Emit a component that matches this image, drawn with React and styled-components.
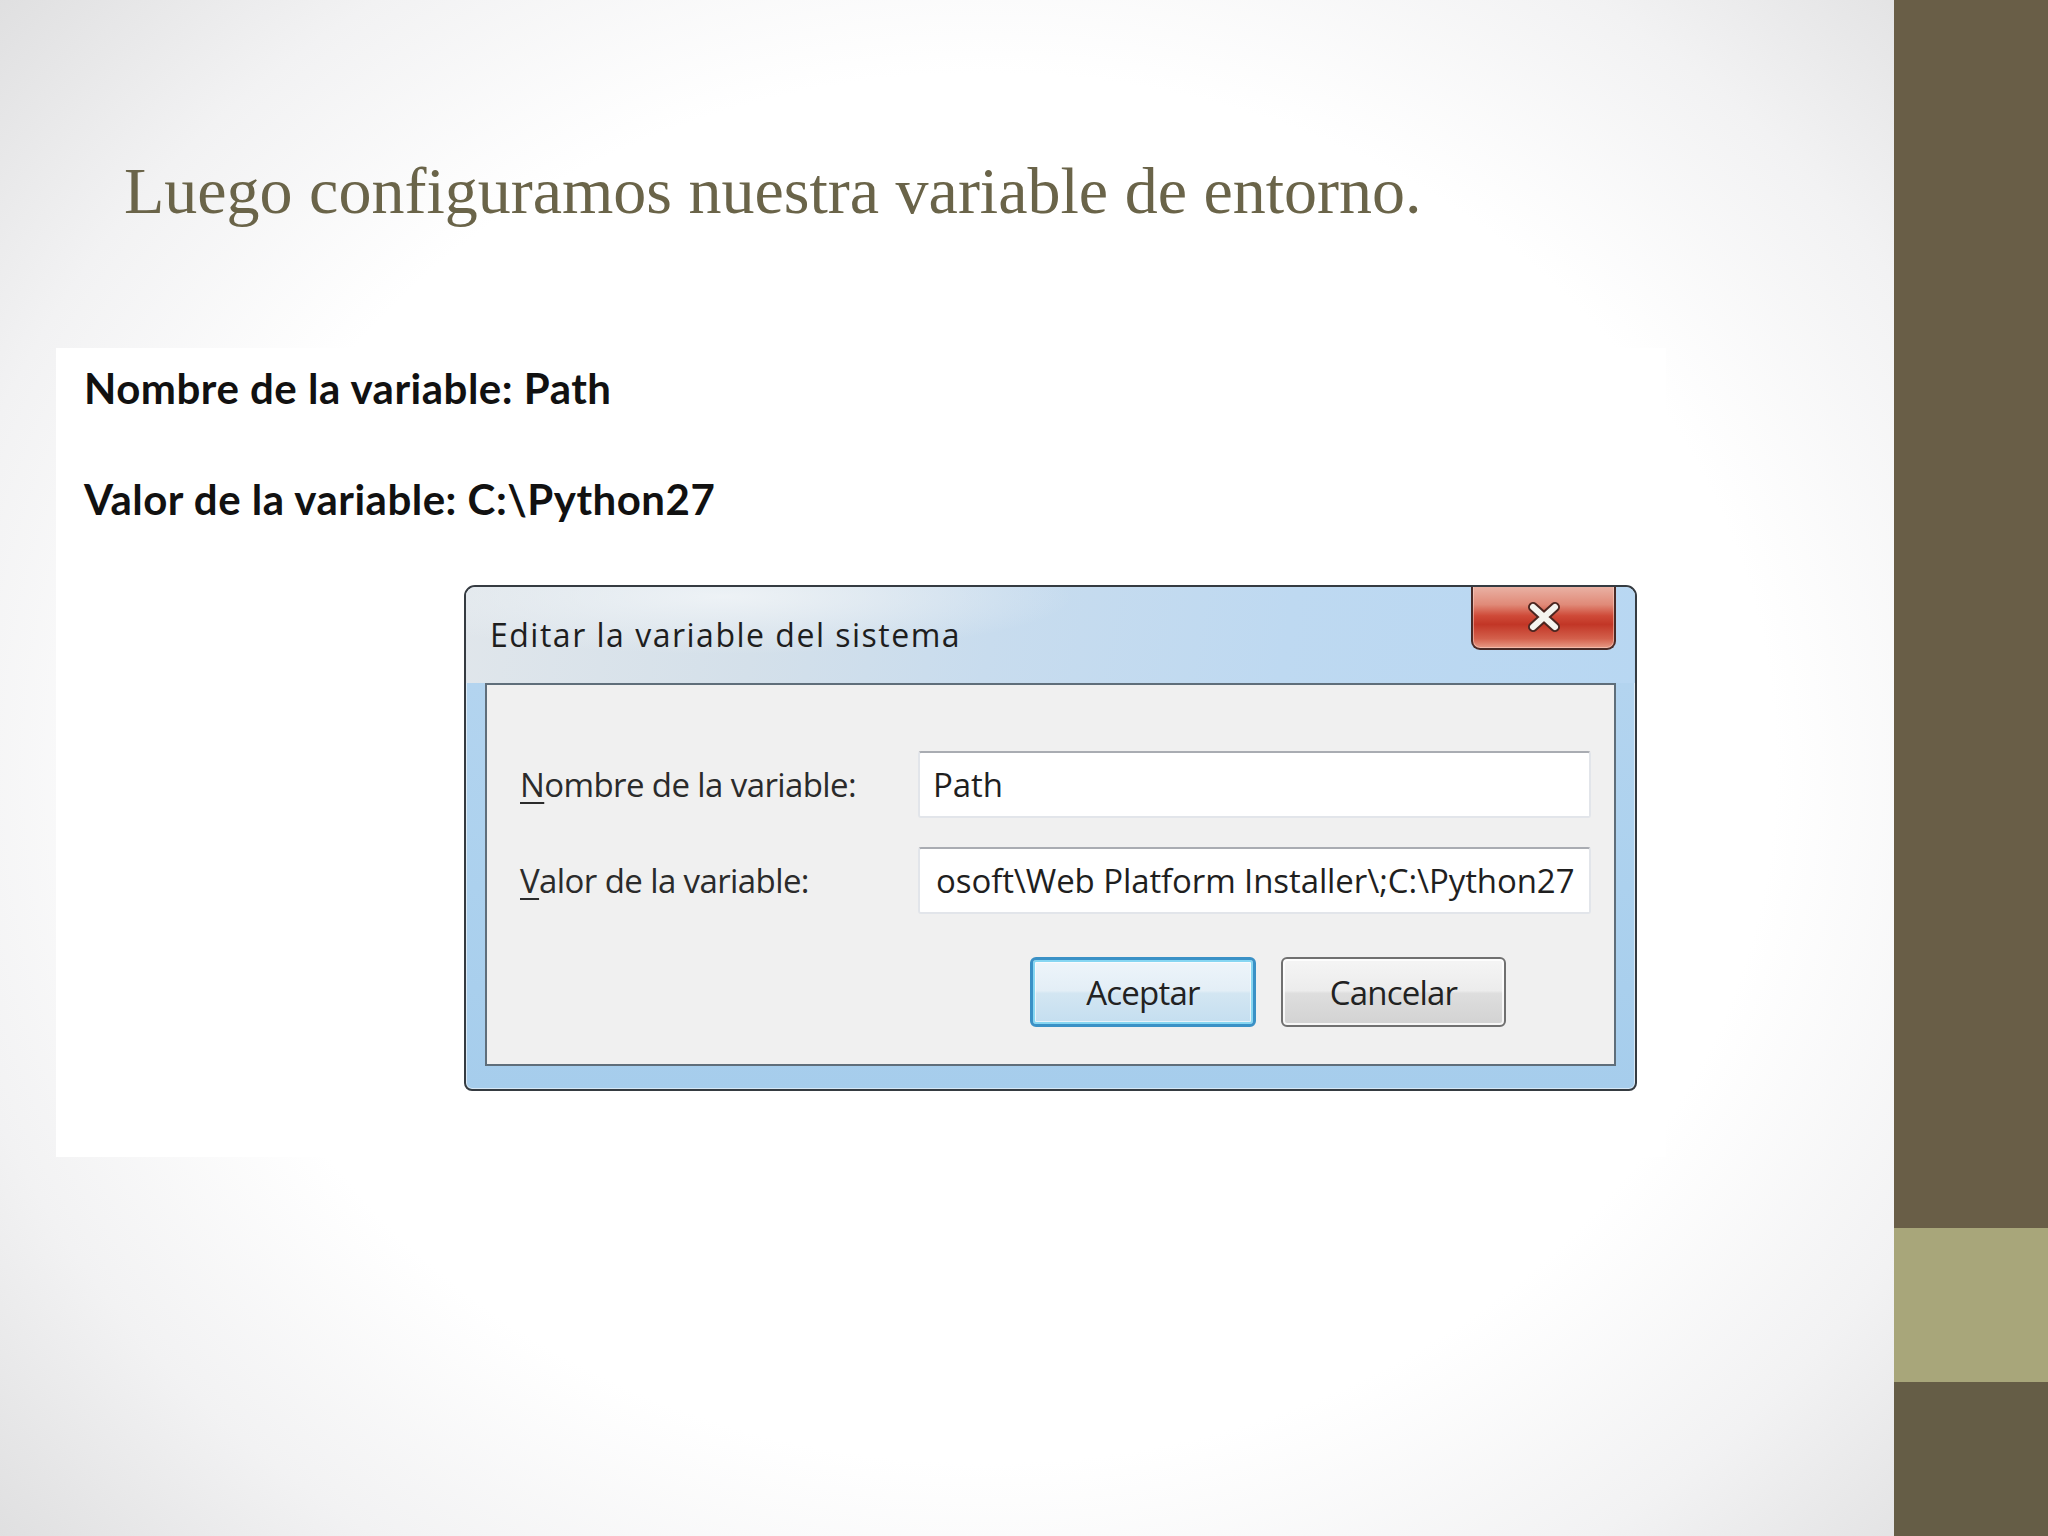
import React from "react";
import styled, { createGlobalStyle } from "styled-components";

const Global = createGlobalStyle`
  html, body { margin: 0; padding: 0; width: 2048px; height: 1536px; overflow: hidden; }
  body { font-family: "Liberation Sans", Arial, sans-serif; }
`;

const Slide = styled.div`
  display: flex;
  width: 2048px;
  height: 1536px;
`;

const Main = styled.main`
  flex: 0 0 1894px;
  display: flex;
  flex-direction: column;
  align-items: flex-start;
  padding-top: 158px;
  box-sizing: border-box;
  background: radial-gradient(ellipse 72% 78% at 52% 50%, #ffffff 58%, #f2f2f3 78%, #dcdcdd 100%);
`;

const Title = styled.h1`
  margin: 0 0 124px 124px;
  font-family: "Liberation Serif", "Times New Roman", serif;
  font-weight: 400;
  font-size: 66px;
  line-height: 66px;
  color: #6a6449;
  letter-spacing: 0px;
  white-space: nowrap;
`;

const Picture = styled.section`
  margin-left: 56px;
  width: 1610px;
  height: 809px;
  box-sizing: border-box;
  padding: 19px 0 0 28px;
  background: #ffffff;
  display: flex;
  flex-direction: column;
  align-items: flex-start;
`;

const Caption = styled.p`
  margin: 0 0 ${(p) => p.$gap}px 0;
  font-family: Lato, "Open Sans", sans-serif;
  font-weight: 700;
  font-size: 42px;
  line-height: 42px;
  color: #111111;
  letter-spacing: 0.5px;
  white-space: nowrap;
`;

const Dialog = styled.div`
  margin-left: 380px;
  width: 1173px;
  height: 506px;
  box-sizing: border-box;
  border: 2px solid #353b41;
  border-radius: 11px 11px 8px 8px;
  box-shadow: inset 0 0 0 1px rgba(255, 255, 255, 0.55);
  background: linear-gradient(180deg, #d3e2ee 0%, #c2daee 14%, #b3d4ef 19%, #acd1ee 60%, #a6cdec 100%);
  display: flex;
  flex-direction: column;
  overflow: hidden;
`;

const TitleBar = styled.div`
  height: 96px;
  flex: 0 0 96px;
  display: flex;
  justify-content: space-between;
  align-items: flex-start;
  background:
    radial-gradient(ellipse 30% 60% at 22% 10%, rgba(240, 244, 247, 0.9), rgba(240, 244, 247, 0) 100%),
    linear-gradient(100deg, #e0e6eb 0%, #d4e0ea 25%, #c8dcee 45%, #bed9f1 70%, #b8d7f2 100%);
`;

const DialogTitle = styled.div`
  padding: 32px 0 0 24px;
  font-family: "Open Sans", "Noto Sans", sans-serif;
  font-size: 32px;
  line-height: 32px;
  letter-spacing: 1.5px;
  color: #1e1e1e;
  white-space: nowrap;
`;

const CloseButton = styled.div`
  margin: -1px 19px 0 0;
  width: 145px;
  height: 64px;
  box-sizing: border-box;
  border: 2px solid #4a2a26;
  border-top: none;
  border-radius: 0 0 9px 9px;
  background: linear-gradient(180deg, #eab3a6 0%, #e08a78 30%, #cf4a38 48%, #c23626 62%, #d3604c 85%, #e79a86 100%);
  box-shadow: inset 0 0 0 1px rgba(255, 220, 210, 0.5);
  display: flex;
  align-items: center;
  justify-content: center;
`;

const Panel = styled.div`
  flex: 1;
  margin: 0 19px 23px 19px;
  box-sizing: border-box;
  border: 2px solid #5f6e7a;
  background: #f0f0f0;
  padding: 66px 25px 0 33px;
  display: flex;
  flex-direction: column;
`;

const Form = styled.div`
  display: grid;
  grid-template-columns: 398px 673px;
  row-gap: 29px;
  align-items: center;
`;

const Label = styled.label`
  font-family: "Open Sans", "Noto Sans", sans-serif;
  font-size: 33px;
  letter-spacing: -0.6px;
  color: #2b2b2b;
  white-space: nowrap;
  u { text-decoration-thickness: 2px; text-underline-offset: 5px; }
`;

const Field = styled.div`
  height: 67px;
  box-sizing: border-box;
  border: 2px solid #e2e5ea;
  border-top-color: #a9acb2;
  border-radius: 3px;
  background: #ffffff;
  padding-left: ${(p) => p.$pad}px;
  display: flex;
  align-items: center;
  overflow: hidden;
  font-family: "Open Sans", "Noto Sans", sans-serif;
  font-size: 33px;
  letter-spacing: -0.1px;
  color: #1f1f1f;
  white-space: nowrap;
`;

const Buttons = styled.div`
  display: flex;
  justify-content: flex-end;
  gap: 25px;
  margin: 43px 83px 0 0;
`;

const Button = styled.div`
  width: ${(p) => p.$w}px;
  height: 70px;
  box-sizing: border-box;
  border-radius: 6px;
  border: ${(p) => (p.$primary ? "3px solid #3a91c6" : "2px solid #707070")};
  box-shadow: ${(p) =>
    p.$primary
      ? "inset 0 0 0 2px #86d6f2, inset 0 0 0 3px rgba(255,255,255,0.6)"
      : "inset 0 0 0 2px rgba(255,255,255,0.8)"};
  background: ${(p) =>
    p.$primary
      ? "linear-gradient(180deg, #eef5fa 0%, #e3eef6 48%, #d3e6f2 52%, #c4def0 100%)"
      : "linear-gradient(180deg, #f5f5f5 0%, #ececec 48%, #dedede 52%, #d2d2d2 100%)"};
  display: flex;
  align-items: center;
  justify-content: center;
  font-family: "Open Sans", "Noto Sans", sans-serif;
  font-size: 33px;
  letter-spacing: -0.8px;
  color: #222222;
`;

const Sidebar = styled.aside`
  flex: 1;
  display: flex;
  flex-direction: column;
`;

const Band = styled.div`
  flex: ${(p) => (p.$h ? `0 0 ${p.$h}px` : "1")};
  background: ${(p) => p.$color};
`;

function CloseGlyph() {
  return (
    <svg width="40" height="36" viewBox="-20 -18 40 36">
      <path d="M-11 -10 L11 10 M11 -10 L-11 10" stroke="#4b2620" strokeWidth="10" strokeLinecap="round" />
      <path d="M-11 -10 L11 10 M11 -10 L-11 10" stroke="#f4f4ef" strokeWidth="6" strokeLinecap="round" />
    </svg>
  );
}

export default function App() {
  return (
    <>
      <Global />
      <Slide>
        <Main>
          <Title>Luego configuramos nuestra variable de entorno.</Title>
          <Picture>
            <Caption $gap={69}>Nombre de la variable: Path</Caption>
            <Caption $gap={65}>Valor de la variable: C:\Python27</Caption>
            <Dialog>
              <TitleBar>
                <DialogTitle>Editar la variable del sistema</DialogTitle>
                <CloseButton>
                  <CloseGlyph />
                </CloseButton>
              </TitleBar>
              <Panel>
                <Form>
                  <Label>
                    <u>N</u>ombre de la variable:
                  </Label>
                  <Field $pad={13}>Path</Field>
                  <Label>
                    <u>V</u>alor de la variable:
                  </Label>
                  <Field $pad={16}>osoft\Web Platform Installer\;C:\Python27</Field>
                </Form>
                <Buttons>
                  <Button $primary $w={226}>Aceptar</Button>
                  <Button $w={225}>Cancelar</Button>
                </Buttons>
              </Panel>
            </Dialog>
          </Picture>
        </Main>
        <Sidebar>
          <Band $h={1228} $color="#695e47" />
          <Band $h={154} $color="#a8a67a" />
          <Band $color="#655d46" />
        </Sidebar>
      </Slide>
    </>
  );
}
